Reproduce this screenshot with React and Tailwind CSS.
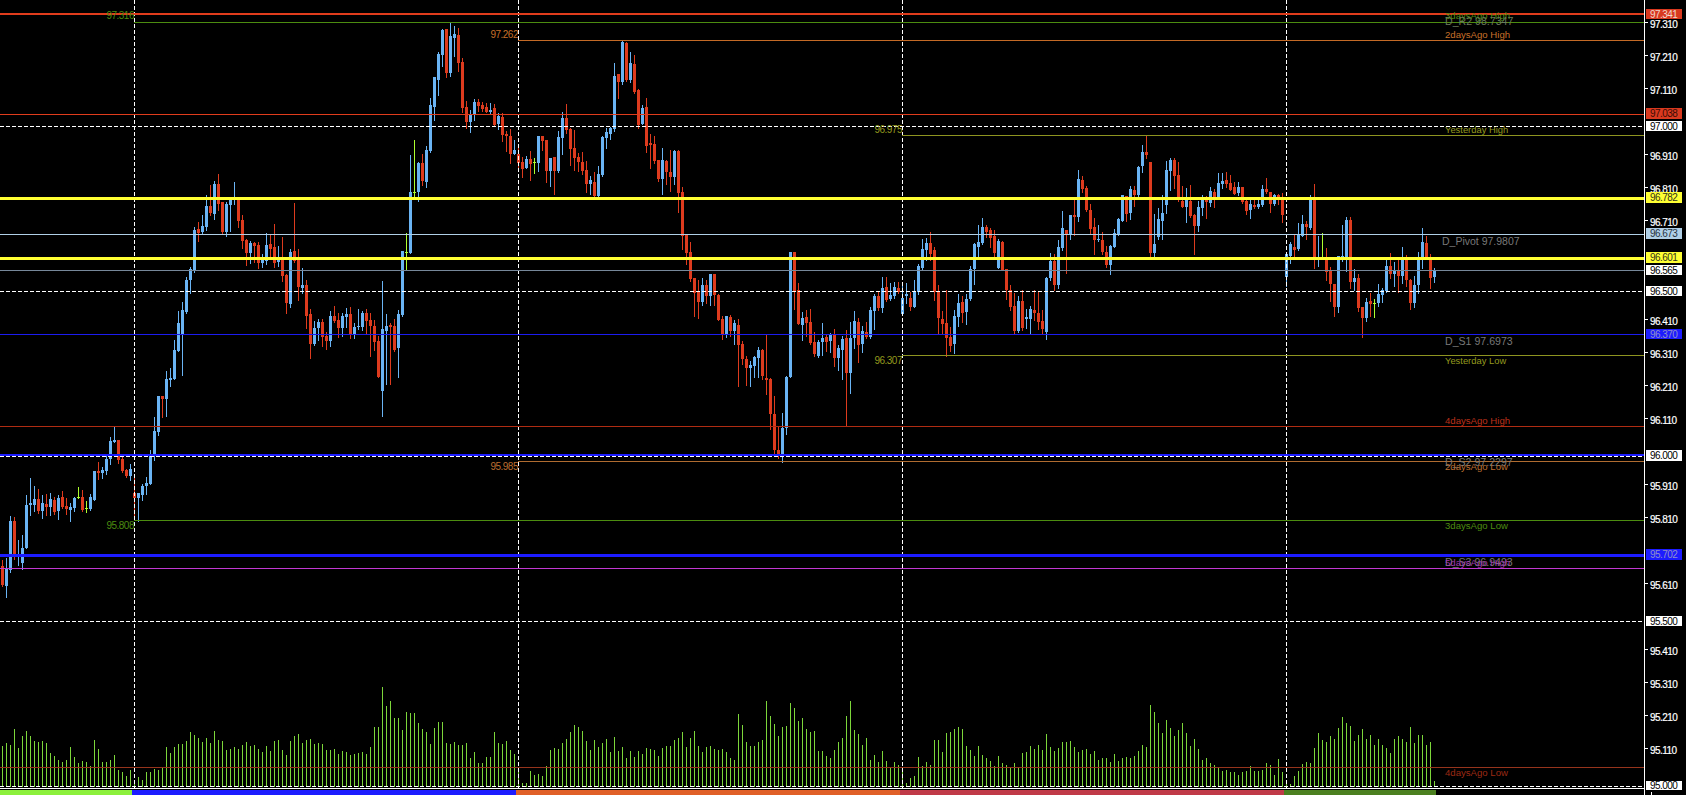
const RED = "#dd3b1e";
const BLUE = "#6ab4f4";
const DOJI = "#adff2f";
const FONT = "'Liberation Sans', Arial, sans-serif";

// [type, high, bodyTop, bodyBottom, low] in chart pixels, one bar every 4px
const CANDLES = [
  ["r",560,566,585,586],["b",558,569,586,597],["b",516,521,570,572],["r",517,521,557,559],["b",540,556,557,565],
  ["b",535,548,563,569],["b",495,505,548,548],["b",478,503,505,515],["b",486,499,505,511],["r",489,499,511,513],
  ["b",495,503,511,518],["r",494,504,507,515],["b",493,499,507,515],["r",497,500,512,514],["b",495,498,511,519],
  ["r",491,497,507,508],["r",498,506,509,514],["b",503,507,510,521],["b",497,498,508,511],["g",487,497,497,498],
  ["r",490,497,510,511],["g",501,508,508,512],["b",494,497,509,510],["b",471,471,500,500],["r",462,471,473,479],
  ["b",467,470,473,478],["b",456,459,471,474],["b",437,441,459,464],["b",426,440,442,442],["r",440,440,460,463],
  ["r",456,459,471,472],["r",469,470,476,477],["b",464,469,476,480],["r",476,493,498,515],["b",493,493,498,521],
  ["b",484,486,495,500],["b",477,483,486,494],["b",450,456,484,484],["b",417,431,456,460],["b",396,396,432,435],
  ["r",396,396,399,417],["b",371,379,399,416],["b",368,378,380,386],["b",340,350,379,379],["b",311,323,351,351],
  ["b",302,310,334,375],["b",277,280,312,313],["b",267,269,280,293],["b",227,230,270,272],["r",222,229,233,241],
  ["b",215,226,232,233],["b",195,206,227,230],["r",185,206,213,215],["b",181,184,214,219],["r",174,184,204,210],
  ["r",202,202,232,233],["b",202,204,232,236],["b",200,200,205,231],["b",182,199,200,204],["r",198,200,221,227],
  ["r",215,220,241,248],["r",239,240,253,265],["b",241,243,253,263],["r",242,243,246,262],["r",242,245,263,268],
  ["b",254,260,263,267],["b",233,245,261,264],["r",235,244,249,257],["r",224,247,263,267],["b",246,260,262,266],
  ["r",237,260,276,281],["r",274,275,303,313],["b",249,252,304,307],["r",203,251,261,262],["r",249,260,287,300],
  ["b",268,285,288,293],["r",280,285,316,328],["r",309,314,344,358],["b",321,328,344,345],["b",319,322,328,340],
  ["r",319,322,337,346],["r",332,336,341,349],["b",311,316,341,346],["r",306,316,321,322],["r",313,320,328,337],
  ["b",313,316,328,336],["b",308,314,317,327],["r",307,314,334,338],["b",323,327,334,338],["b",309,326,327,329],
  ["b",311,313,327,330],["r",309,313,321,334],["r",313,320,326,356],["r",320,326,342,350],["r",336,341,377,377],
  ["b",281,329,391,416],["b",314,326,331,384],["r",323,325,327,384],["r",319,326,350,351],["b",310,314,348,377],
  ["b",251,251,315,316],["g",233,252,252,270],["b",155,192,253,253],["g",140,192,192,196],["b",162,163,192,201],
  ["r",154,163,181,185],["b",146,150,182,187],["b",98,105,151,152],["b",77,77,107,120],["b",52,54,80,95],
  ["b",29,30,55,66],["r",29,29,73,77],["b",22,36,73,76],["b",26,34,38,56],["r",28,35,63,71],
  ["r",58,62,108,112],["r",101,107,122,128],["b",110,115,122,132],["b",99,102,114,120],["r",99,102,106,111],
  ["r",102,105,109,111],["r",103,107,112,112],["b",103,110,112,114],["r",104,108,125,126],["b",113,116,124,129],
  ["r",113,117,135,141],["r",131,134,136,151],["r",129,136,154,163],["b",140,150,154,154],["r",144,154,163,171],
  ["r",157,162,169,177],["b",156,159,168,168],["r",151,159,164,180],["g",158,162,162,173],["b",136,136,163,171],
  ["r",136,136,141,150],["r",140,140,171,182],["b",158,158,171,186],["r",157,157,171,194],["b",131,137,171,172],
  ["b",112,118,138,154],["r",104,118,130,133],["r",128,129,149,165],["r",130,148,158,170],["r",153,157,162,171],
  ["r",152,162,171,174],["r",161,170,184,192],["b",176,180,184,194],["r",172,182,196,197],["b",166,174,196,197],
  ["b",136,137,175,176],["b",128,132,138,148],["b",127,128,134,139],["b",63,76,129,131],["r",74,74,82,98],
  ["b",40,42,82,84],["r",42,43,80,81],["b",52,63,80,82],["r",55,64,92,93],["r",89,90,125,128],
  ["b",105,108,124,124],["r",98,107,146,152],["r",134,143,145,168],["r",136,144,161,163],["r",160,160,179,181],
  ["b",148,160,179,194],["r",160,161,172,184],["r",150,172,177,191],["b",150,151,177,184],["r",150,151,193,212],
  ["r",187,192,236,249],["r",235,235,253,264],["r",242,252,279,281],["r",278,278,293,316],["r",280,292,302,318],
  ["b",278,285,302,305],["r",280,285,296,303],["b",274,274,296,305],["r",274,274,295,305],["r",294,295,320,320],
  ["r",316,319,334,339],["b",316,316,334,337],["r",315,317,331,336],["b",320,323,331,344],["r",319,325,345,386],
  ["r",341,344,359,364],["r",356,359,368,385],["b",361,365,368,386],["b",356,357,366,377],["b",347,350,358,377],
  ["r",349,350,376,379],["r",335,378,380,394],["r",378,379,414,429],["r",396,414,450,453],["r",427,450,454,458],
  ["b",413,428,454,462],["b",376,377,428,434],["b",252,252,377,377],["r",252,252,291,309],["r",283,290,324,324],
  ["b",312,318,325,340],["r",310,317,323,336],["r",309,322,343,344],["r",332,342,354,356],["b",340,342,356,357],
  ["b",323,338,342,355],["r",334,337,342,351],["b",333,334,341,352],["r",329,334,358,366],["b",345,348,358,370],
  ["b",336,339,350,379],["r",330,338,373,425],["b",322,338,373,393],["b",311,321,338,348],["r",318,322,345,362],
  ["b",326,331,344,352],["r",322,332,337,338],["b",307,310,337,338],["b",294,296,311,329],["r",291,296,308,310],
  ["b",277,288,308,312],["r",277,287,300,301],["b",283,295,299,300],["b",282,287,296,298],["r",282,288,292,293],
  ["b",282,298,314,314],["b",283,294,296,303],["r",292,298,307,310],["b",280,291,307,307],["b",264,266,292,294],
  ["b",239,249,268,270],["b",238,243,250,260],["r",232,243,254,260],["r",247,250,292,300],["r",285,291,318,333],
  ["r",311,319,324,333],["r",290,323,338,356],["r",327,337,346,351],["b",310,316,344,353],["b",294,303,317,326],
  ["r",296,302,313,322],["b",294,299,312,324],["b",266,269,299,300],["b",243,244,269,284],["b",225,242,247,257],
  ["b",218,227,243,244],["r",225,227,232,237],["r",228,230,238,247],["r",230,236,253,257],["b",239,241,268,268],
  ["r",241,242,270,270],["r",269,269,290,299],["r",285,290,307,310],["r",293,306,331,333],["b",296,301,331,332],
  ["r",290,301,328,330],["b",309,317,319,328],["b",306,309,319,334],["r",290,310,313,320],["r",292,313,322,329],
  ["r",310,321,329,333],["b",277,278,332,339],["b",253,261,278,280],["r",254,261,285,290],["b",240,247,285,288],
  ["b",211,228,248,250],["r",230,230,234,273],["b",215,215,235,239],["r",200,215,217,235],["b",170,179,217,221],
  ["r",176,180,189,192],["r",186,188,210,211],["r",204,210,229,234],["r",218,227,240,254],["b",225,239,240,241],
  ["r",232,240,252,254],["r",246,252,265,267],["b",245,246,265,274],["b",229,233,247,247],["b",218,219,234,235],
  ["b",195,195,221,221],["r",196,196,214,221],["b",186,189,213,219],["r",186,190,195,206],["b",166,167,195,196],
  ["b",145,152,166,172],["r",136,152,155,158],["r",162,162,253,256],["b",214,244,253,256],["b",208,219,237,239],
  ["b",195,213,221,239],["b",161,170,205,213],["b",158,160,171,190],["r",158,160,176,188],["r",162,175,200,201],
  ["r",186,201,207,207],["b",188,199,207,222],["r",185,201,216,217],["r",214,215,226,254],["b",201,207,226,231],
  ["b",195,199,208,215],["r",196,199,202,218],["b",187,191,203,206],["r",189,192,197,207],["b",173,183,197,199],
  ["b",173,181,184,188],["r",172,180,184,187],["r",175,183,190,190],["r",182,187,194,194],["b",182,187,193,195],
  ["r",187,187,202,203],["r",200,201,211,214],["b",200,204,210,218],["r",200,205,207,208],["b",199,204,207,208],
  ["b",185,189,205,206],["r",178,189,192,193],["r",192,192,204,212],["b",194,195,204,205],["r",194,195,197,204],
  ["r",193,197,215,222],["b",254,254,277,286],["b",242,244,256,263],["r",235,247,250,256],["b",223,235,249,250],
  ["b",215,224,236,236],["r",221,224,227,239],["b",195,200,228,229],["r",184,200,258,268],["b",236,258,259,266],
  ["g",233,257,257,258],["r",248,259,272,280],["r",267,270,284,301],["r",284,284,307,316],["b",256,256,307,312],
  ["b",225,256,258,261],["b",217,220,258,271],["r",217,220,282,288],["b",269,278,282,290],["r",274,278,308,311],
  ["r",307,307,318,337],["b",298,302,318,321],["r",293,301,304,316],["g",299,303,303,317],["b",284,294,303,306],
  ["b",288,290,295,302],["b",260,266,291,292],["r",253,266,274,278],["b",262,270,274,286],["r",260,270,276,292],
  ["b",247,260,276,283],["r",255,260,280,286],["r",279,280,303,309],["b",276,285,303,307],["b",252,258,285,293],
  ["b",228,242,258,268],["r",236,243,258,258],["r",254,258,278,288],["b",268,270,277,282],
];

// bar tops read off the sub window, first two blocks measured from y=670, last one from y=600
const VOL_A = [228,220,225,178,235,198,183,198,213,217,213,220,250,258,270,277,270,231,262,279,274,277,289,210,237,277,277,270,255,300,306,318,300,340,321,331,306,306,297,300,292,232,249,231,222,222,213,186,195,204,217,205,219,183,210,213,240,237,231,237,225,217,228,225,237,246,228,243,213,210,240,255,213,198,192,219,210,207,222,219,222,240,240,237,252,243,246,255,252,250,247,252,231,171,171,52,108,93,144,144,180,126,129,129,159,177,186,222,174,156,156,219,222,216,225,225,219,264,246,279,279,261,261,186,219,222,213,240,252,300,338,338,303,315,312,318,288,240,234,237];
const VOL_B = [219,207,186,165,171,183,213,240,210,231,219,207,246,201,243,231,264,243,261,243,252,234,237,240,258,234,228,228,210,204,186,231,204,183,228,246,231,228,237,240,237,246,264,270,132,165,216,228,228,216,210,93,138,162,198,171,168,99,114,153,144,177,186,183,243,243,258,264,240,216,204,138,93,180,192,225,204,270,255,276,243,273,294,276,285,300,339,324,318,261,288,276,285,210,210,246,189,186,177,171,177,228,240,258,228,255,264,273,288,258,279,285,294,279,291,249,246,228,237,225,240,192,231,243,234,216,216,213,231,246,240,237,252,243,270,264,264,276,252,273];
const VOL_C = [475,471,474,468,453,435,441,315,336,369,399,360,384,408,390,369,399,438,417,447,480,474,489,495,501,513,510,516,516,525,516,513,498,513,513,510,489,495,525,477,516,545,552,528,513,492,486,489,444,399,420,426,408,417,384,351,369,378,423,405,387,417,405,435,417,435,444,459,417,408,417,426,381,429,405,405,435,426,543];
const VOLUMES = [...VOL_A, ...VOL_B].map((z) => 670 + z / 3).concat(VOL_C.map((z) => 600 + z / 3));

const LINES = [
  { y: 13, h: 2, x: 0, c: "#e03c1c" },
  { y: 22, h: 1, x: 134, c: "#4c8c10" },
  { y: 40, h: 1, x: 518, c: "#c46a26" },
  { y: 114, h: 1, x: 0, c: "#e03c1c" },
  { y: 135, h: 1, x: 902, c: "#8e9420" },
  { y: 197, h: 3, x: 0, c: "#ffff33" },
  { y: 234, h: 1, x: 0, c: "#b0cfe6" },
  { y: 257, h: 3, x: 0, c: "#ffff33" },
  { y: 270, h: 1, x: 0, c: "#77889a" },
  { y: 334, h: 1, x: 0, c: "#1c1cf0" },
  { y: 355, h: 1, x: 902, c: "#8e9420" },
  { y: 426, h: 1, x: 0, c: "#b02c12" },
  { y: 454, h: 2, x: 0, c: "#1c1cff" },
  { y: 461, h: 1, x: 518, c: "#b06c30" },
  { y: 520, h: 1, x: 134, c: "#4c8c10" },
  { y: 554, h: 3, x: 0, c: "#1c1cff" },
  { y: 568, h: 1, x: 0, c: "#c238d2" },
  { y: 767, h: 1, x: 0, c: "#96341c" },
];
const DASHED_Y = [126, 291, 456, 621, 786];
const CROSS_X = [134, 518, 902, 1286];

const LABELS = [
  { t: "3daysAgo High", x: 1445, y: 19, c: "#4c8c10", s: 9.6 },
  { t: "D_R2 98.7347", x: 1445, y: 25, c: "#6a7a5c", s: 10.6 },
  { t: "2daysAgo High", x: 1445, y: 38, c: "#c8702a", s: 9.6 },
  { t: "Yesterday High", x: 1445, y: 133, c: "#949a1e", s: 9.4 },
  { t: "D_Pivot 97.9807", x: 1442, y: 245, c: "#787878", s: 10.5 },
  { t: "D_S1 97.6973", x: 1445, y: 345, c: "#787878", s: 10.6 },
  { t: "Yesterday Low", x: 1445, y: 364, c: "#949a1e", s: 9.4 },
  { t: "4daysAgo High", x: 1445, y: 424, c: "#bc301a", s: 9.6 },
  { t: "D_S2 97.2297", x: 1445, y: 466, c: "#787878", s: 10.6 },
  { t: "2daysAgo Low", x: 1445, y: 470, c: "#bc6e30", s: 9.6 },
  { t: "3daysAgo Low", x: 1445, y: 529, c: "#4c8c10", s: 9.6 },
  { t: "D_S3 96.9493", x: 1445, y: 566, c: "#787878", s: 10.6 },
  { t: "5daysAgo High", x: 1445, y: 566, c: "#a038b0", s: 9.6 },
  { t: "4daysAgo Low", x: 1445, y: 776, c: "#9c2a14", s: 9.6 },
  { t: "97.316", x: 134, y: 19, c: "#4c8c10", s: 10, end: true },
  { t: "97.262", x: 518, y: 38, c: "#c8702a", s: 10, end: true },
  { t: "96.975", x: 902, y: 133, c: "#949a1e", s: 10, end: true },
  { t: "96.307", x: 902, y: 364, c: "#949a1e", s: 10, end: true },
  { t: "95.985", x: 518, y: 470, c: "#bc6e30", s: 10, end: true },
  { t: "95.808", x: 134, y: 529, c: "#4c8c10", s: 10, end: true },
];

const TICKS = [
  ["97.310", 22], ["97.210", 55], ["97.110", 88], ["96.910", 154], ["96.810", 187], ["96.710", 220],
  ["96.410", 319], ["96.310", 352], ["96.210", 385], ["96.110", 418], ["95.910", 484], ["95.810", 517],
  ["95.610", 583], ["95.410", 649], ["95.310", 682], ["95.210", 715], ["95.110", 748],
];

const BOXES = [
  { t: "97.341", y: 9, h: 10, bg: "#d9391f", c: "#f2d8cc" },
  { t: "97.038", y: 108, h: 11, bg: "#d9391f", c: "#3a0c04" },
  { t: "97.000", y: 121, h: 10, bg: "#ffffff", c: "#000000" },
  { t: "96.782", y: 192, h: 11, bg: "#ffff33", c: "#33331a" },
  { t: "96.673", y: 228, h: 11, bg: "#b0cfe6", c: "#26323e" },
  { t: "96.601", y: 252, h: 11, bg: "#ffff33", c: "#33331a" },
  { t: "96.565", y: 265, h: 10, bg: "#ffffff", c: "#000000" },
  { t: "96.500", y: 286, h: 10, bg: "#ffffff", c: "#000000" },
  { t: "96.370", y: 329, h: 10, bg: "#1c1cff", c: "#9090c8" },
  { t: "96.000", y: 450, h: 11, bg: "#ffffff", c: "#000000" },
  { t: "95.702", y: 549, h: 11, bg: "#1c1cff", c: "#9090c8" },
  { t: "95.500", y: 616, h: 10, bg: "#ffffff", c: "#000000" },
  { t: "95.000", y: 781, h: 9, bg: "#ffffff", c: "#000000" },
];

const SESSIONS = [
  "w-[132px] bg-[#8cf03c]",
  "w-[384px] bg-[#1c1cff]",
  "w-[384px] bg-[#e06028]",
  "w-[384px] bg-[#c03a48]",
  "w-[152px] bg-[#4b8020]",
];

function Candle({ candle, index }) {
  const [type, high, top, bottom, low] = candle;
  const x = 2 + 4 * index;
  const color = type === "r" ? RED : type === "b" ? BLUE : DOJI;
  return (
    <g fill={color}>
      <rect x={x} y={high} width={1} height={low - high + 1} />
      <rect x={x - 1} y={top} width={3} height={Math.max(bottom - top, 1)} />
    </g>
  );
}

function Chart() {
  return (
    <svg width="1644" height="790" viewBox="0 0 1644 790" shapeRendering="crispEdges" className="block" style={{ fontFamily: FONT }}>
      {VOLUMES.map((top, i) => (
        <rect key={i} x={2 + 4 * i} y={Math.round(top)} width={1} height={787 - Math.round(top)} fill="#7cd63a" />
      ))}
      {CANDLES.map((c, i) => (
        <Candle key={i} candle={c} index={i} />
      ))}
      {CROSS_X.map((x) => (
        <line key={x} x1={x + 0.5} x2={x + 0.5} y1="0" y2="788" stroke="#fff" strokeDasharray="4 2" />
      ))}
      {DASHED_Y.map((y) => (
        <line key={y} x1="0" x2="1644" y1={y + 0.5} y2={y + 0.5} stroke="#fff" strokeDasharray="4 2" />
      ))}
      {LINES.map((l) => (
        <rect key={l.y} x={l.x} y={l.y} width={1644 - l.x} height={l.h} fill={l.c} />
      ))}
      <rect x="0" y="788" width="1644" height="1" fill="#fff" />
      {LABELS.map((l) => (
        <text
          key={l.t}
          x={l.x}
          y={l.y}
          fill={l.c}
          fontSize={l.s}
          letterSpacing={l.end ? -0.5 : 0}
          textAnchor={l.end ? "end" : "start"}
          shapeRendering="auto"
        >
          {l.t}
        </text>
      ))}
    </svg>
  );
}

function PriceAxis() {
  return (
    <svg width="42" height="795" viewBox="0 0 42 795" shapeRendering="crispEdges" className="block" style={{ fontFamily: FONT }}>
      <rect x="0" y="0" width="1" height="795" fill="#fff" />
      {TICKS.map(([t, y]) => (
        <g key={t}>
          <rect x="1" y={y} width="3" height="1" fill="#fff" />
          <text x="6" y={y + 5.5} fill="#fff" fontSize="10" letterSpacing="-0.55" stroke="#fff" strokeWidth="0.2">{t}</text>
        </g>
      ))}
      {BOXES.map((b) => (
        <g key={b.t}>
          <rect x="2" y={b.y} width="36" height={b.h} fill={b.bg} />
          <text x="6" y={b.y + b.h / 2 + 3.6} fill={b.c} fontSize="10" letterSpacing="-0.55">{b.t}</text>
        </g>
      ))}
      <rect x="7" y="792" width="1" height="3" fill="#fff" />
    </svg>
  );
}

export default function App() {
  return (
    <div className="flex w-[1686px] h-[795px] bg-black overflow-hidden">
      <div className="flex flex-col w-[1644px]">
        <Chart />
        <div className="flex h-[5px]">
          {SESSIONS.map((s) => (
            <div key={s} className={s} />
          ))}
        </div>
      </div>
      <PriceAxis />
    </div>
  );
}
